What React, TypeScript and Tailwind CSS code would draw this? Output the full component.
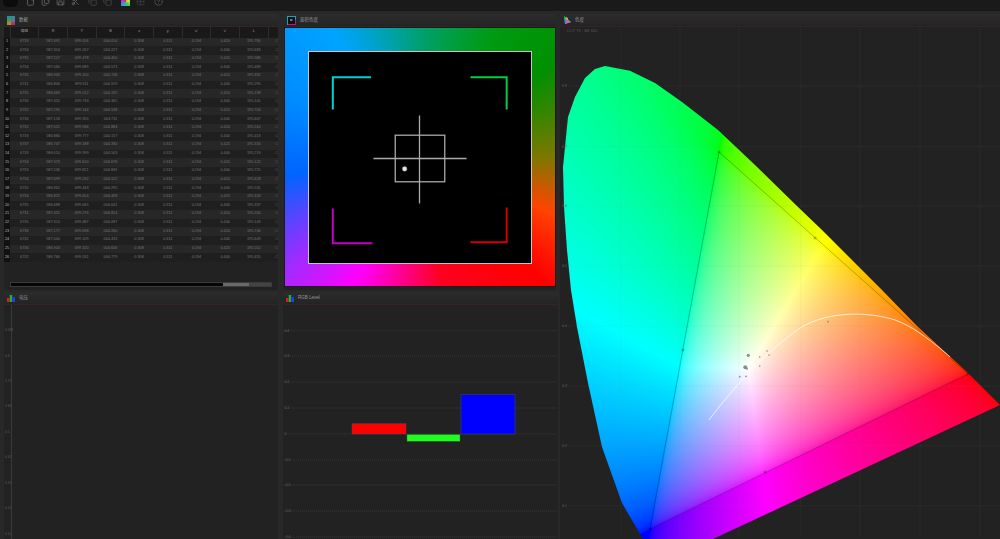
import React, { useEffect, useRef } from "react";
import { CircleHelp, Copy, File, Files, Grid2x2, Save, Scissors } from "lucide-react";

const COLUMNS = ["编辑", "R", "Y", "B", "x", "y", "u'", "v'", "L"];

const ROWS = Array.from({ length: 26 }, (_, i) => [
  String(6733 + ((i * 7) % 5) - (i % 3)),
  (587.491 - ((i * 137) % 900) / 1000).toFixed(3),
  (699.056 + ((i * 211) % 800) / 1000).toFixed(3),
  (604.054 + ((i * 173) % 900) / 1000).toFixed(3).replace(/^6/, "0"),
  "0.308",
  "0.311",
  "0.194",
  i % 2 ? "0.440" : "0.420",
  (195.78 - ((i * 97) % 700) / 1000).toFixed(3),
]);

const LOCUS = [
  [605, 66], [630, 70.7], [655, 83], [682, 102], [718, 130], [755, 165], [798, 207], [822, 230],
  [882, 290], [918, 327], [968, 373], [1000, 405], [713, 539], [643, 539], [622, 503],
  [602, 447], [588, 383], [577, 327], [571, 290], [567, 250], [564, 207], [563, 167], [568, 117],
  [575, 97], [585, 78], [595, 69],
];

const SPOTS = [
  [748.3, 355.3, 1.6], [767, 351, 0.8], [769, 355, 0.8], [759.7, 357, 0.8], [759.7, 366, 0.8],
  [745.3, 367.3, 2], [747, 368.7, 1], [739.7, 376.7, 0.9], [746, 376.3, 0.9], [828, 321.7, 0.9],
];

const CIE_Y = [
  [86, "0.8"], [146.7, "0.7"], [206, "0.6"], [266, "0.5"], [326, "0.4"], [386, "0.3"], [445.7, "0.2"], [505.7, "0.1"],
] as const;
const CIE_X = [620.7, 680, 739, 800.7, 860, 920, 980];

const LEVELS = [
  [330.7, "0.4"], [356, "0.3"], [382, "0.2"], [408, "0.1"], [434, "0"], [460, "-0.1"], [485, "-0.2"], [511, "-0.3"], [537, "-0.4"],
] as const;

const VOLTS = [
  [330, "0.084"], [356, "0.8"], [381, "0.71"], [406, "0.64"], [432, "0.5"], [457, "0.41"], [483, "0.31"], [508, "0.21"], [534, "0.11"],
] as const;

function CieCanvas() {
  const ref = useRef<HTMLCanvasElement>(null);

  useEffect(() => {
    const ctx = ref.current?.getContext("2d");
    if (!ctx) return;
    const [ox, oy, w, h] = [560, 27, 440, 512];
    const [gx, gy, bx, by, rx, ry] = [719, 152, 650, 529, 968, 374];
    const d = (gy - by) * (rx - bx) + (bx - gx) * (ry - by);
    const bary = (x: number, y: number) => {
      const g = ((y - by) * (rx - bx) + (bx - x) * (ry - by)) / d;
      const r = ((gy - by) * (x - bx) + (bx - gx) * (y - by)) / d;
      return [r, g, 1 - r - g];
    };
    const white = bary(748, 368);
    const img = ctx.createImageData(w, h);
    for (let py = 0; py < h; py++) {
      for (let px = 0; px < w; px++) {
        const raw = bary(px + ox, py + oy).map((v, i) => v / white[i]);
        const c = raw.map((v) => Math.max(0, v));
        // left of the green-blue edge the reference leans further to cyan
        if (raw[0] < 0) c[2] += 0.45 * -raw[0];
        const max = Math.max(...c) || 1;
        const at = (py * w + px) * 4;
        img.data[at] = 255 * Math.pow(c[0] / max, 0.45);
        img.data[at + 1] = 255 * Math.pow(c[1] / max, 0.45);
        img.data[at + 2] = 255 * Math.pow(c[2] / max, 0.45);
        img.data[at + 3] = 255;
      }
    }
    ctx.putImageData(img, 0, 0);
    ctx.globalCompositeOperation = "destination-in";
    ctx.beginPath();
    LOCUS.forEach(([x, y], i) => (i ? ctx.lineTo(x - ox, y - oy) : ctx.moveTo(x - ox, y - oy)));
    ctx.closePath();
    ctx.fill();
  }, []);

  return <canvas ref={ref} width={440} height={512} className="absolute inset-0" />;
}

function CieChart() {
  return (
    <div className="relative flex-1 overflow-hidden">
      <CieCanvas />
      <svg viewBox="560 27 440 512" className="absolute inset-0 h-full w-full">
        {CIE_X.map((x) => (
          <line key={x} x1={x} x2={x} y1={27} y2={539} stroke="#808080" strokeOpacity={0.16} strokeWidth={0.7} strokeDasharray="1 1" />
        ))}
        {CIE_Y.map(([y, label]) => (
          <g key={label}>
            <line x1={562} x2={1000} y1={y} y2={y} stroke="#808080" strokeOpacity={0.22} strokeWidth={0.7} strokeDasharray="1 1" />
            <text x={562} y={y + 1.2} fontSize={3.5} fill="#5c5c5c">{label}</text>
          </g>
        ))}
        <text x={567} y={31.5} fontSize={4} fill="#555">CCT 78 · ΔE 600</text>
        <polygon points="719,152 650,529 968,374" fill="none" stroke="#000" strokeOpacity={0.3} strokeWidth={0.8} />
        {[[719, 152], [650, 529], [968, 374], [815, 238], [683, 350], [765, 472]].map(([x, y]) => (
          <circle key={x} cx={x} cy={y} r={1.3} fill="#000" fillOpacity={0.18} stroke="#000" strokeOpacity={0.25} strokeWidth={0.4} />
        ))}
        <path
          d="M709 420C730 392 765 352 800 328C830 310 870 312 895 320C915 327 935 344 950 357"
          fill="none"
          stroke="#fff"
          strokeOpacity={0.85}
          strokeWidth={0.9}
        />
        {SPOTS.map(([x, y, r]) => (
          <circle key={x} cx={x} cy={y} r={r} fill="#8d8d8d" />
        ))}
      </svg>
    </div>
  );
}

function TargetMarks() {
  return (
    <svg viewBox="308 50 224 213" className="h-full w-full" fill="none">
      <path d="M332 108V75.5H370.500" stroke="#00d2d2" strokeWidth={2} />
      <path d="M471 75.500H507.500V108" stroke="#00d044" strokeWidth={2} />
      <path d="M332 208V243H372" stroke="#c400c4" strokeWidth={2} />
      <path d="M471 242H507.500V207" stroke="#d40000" strokeWidth={2} />
      <g stroke="#ababab" strokeWidth={1.3}>
        <path d="M419.500 114V203M373 157.500H467" />
        <rect x={395} y={134} width={50} height={47} />
      </g>
      <circle cx={404.500} cy={168} r={2.300} fill="#e8e8e8" stroke="#999" strokeWidth={0.5} />
    </svg>
  );
}

function PanelTitle({ icon, children }: { icon: React.ReactNode; children: React.ReactNode }) {
  return (
    <div className="flex h-[13px] shrink-0 items-center gap-[4px] border-b border-[#352525] bg-gradient-to-b from-[#2c2c2c] to-[#242424] pl-[3px] text-[4.5px] text-[#9a9a9a]">
      {icon}
      <span>{children}</span>
    </div>
  );
}

const TableIcon = (
  <svg viewBox="0 0 8 9" className="h-[9px] w-[8px]">
    <rect width="8" height="3" fill="#2e8f8a" />
    <rect y="3" width="4" height="3" fill="#3ea04a" />
    <rect x="4" y="3" width="4" height="3" fill="#8a5aa8" />
    <rect y="6" width="4" height="3" fill="#b08a30" />
    <rect x="4" y="6" width="4" height="3" fill="#a83a5a" />
  </svg>
);

const TargetIcon = (
  <svg viewBox="0 0 9 9" className="h-[9px] w-[9px]">
    <rect x="0.5" y="0.5" width="8" height="8" fill="#111" stroke="#1aa0c0" />
    <path d="M8.500 4V8.500H1" fill="none" stroke="#c0108a" />
    <rect x="3" y="3" width="2.500" height="2" fill="#777" />
  </svg>
);

const GamutIcon = (
  <svg viewBox="0 0 8 8" className="h-[8px] w-[8px]">
    <path d="M1 0L8 6L2 8Z" fill="#30d060" />
    <path d="M3 3.500L8 6L2 8Z" fill="#e050c0" />
    <path d="M1 4L3 4.500L2 8Z" fill="#3060ff" />
    <path d="M3 0.500L5 2.500L4 4Z" fill="#e0e040" />
  </svg>
);

const BarsIcon = (
  <svg viewBox="0 0 8 7" className="h-[7px] w-[8px]">
    <rect y="3" width="2.500" height="4" fill="#d02020" />
    <rect x="2.700" width="2.500" height="7" fill="#20b040" />
    <rect x="5.400" y="2" width="2.600" height="5" fill="#2040e0" />
  </svg>
);

export default function App() {
  return (
    <div className="flex h-[539px] w-[1000px] flex-col overflow-hidden bg-[#282828] blur-[0.5px] [font-family:'Liberation_Sans','Noto_Sans_CJK_SC',sans-serif]">
      {/* toolbar, cut off at the top of the capture */}
      <div className="h-[11px] shrink-0 overflow-hidden bg-[#1a1a1a] text-[#6e6e6e]">
        <div className="-mt-[4px] flex items-center">
          <div className="ml-[3px] h-[11px] w-[15px] rounded-full bg-[#0c0c0c]" />
          <div className="ml-[8px] flex items-center gap-[6px]">
            <File size={9} />
            <Files size={9} />
            <Save size={9} />
            <Scissors size={9} />
            <Copy size={9} className="ml-[2px] text-[#4c4c4c]" />
            <Copy size={9} className="text-[#4c4c4c]" />
            <div className="ml-[3px] h-[9px] w-[9px] bg-[conic-gradient(#e03030,#e0e030,#30d060,#30a0e0,#c030c0,#e03030)]" />
            <Grid2x2 size={9} className="text-[#3f3f3f]" />
            <CircleHelp size={9} className="ml-[3px] text-[#555]" />
          </div>
        </div>
      </div>

      <div className="grid flex-1 grid-cols-[280px_278px_442px] grid-rows-[278px_247px] pt-[3px]">
        {/* data table */}
        <div className="pb-[2px] pl-[4px] pr-[2px]">
          <div className="flex h-full flex-col bg-[#222222]">
            <PanelTitle icon={TableIcon}>数据</PanelTitle>
            <table className="w-[274px] table-fixed border-collapse text-center text-[3.8px] leading-none text-[#767676]">
              <thead>
                <tr className="h-[10.500px] bg-[#191919] text-[#999]">
                  <th className="w-[6px] font-normal" />
                  {COLUMNS.map((name) => (
                    <th key={name} className="w-[28.700px] border-l border-[#2d2d2d] font-normal">{name}</th>
                  ))}
                  <th className="border-l border-[#2d2d2d]" />
                </tr>
              </thead>
              <tbody>
                {ROWS.map((row, i) => (
                  <tr key={i} className={i % 2 ? "h-[8.640px] bg-[#1f1f1f]" : "h-[8.640px] bg-[#272727]"}>
                    <td className="bg-[#111111] text-[#bbb]">{i + 1}</td>
                    {row.map((cell, j) => (
                      <td key={j}>{cell}</td>
                    ))}
                    <td className="text-right text-[#6a5a4a]">C</td>
                  </tr>
                ))}
              </tbody>
            </table>
            <div className="mx-[6px] mb-[3px] mt-auto flex h-[5px] border border-[#3b3b3b] bg-[#444]">
              <div className="w-[212px] bg-[#050505]" />
              <div className="w-[26px] bg-[#6a6a6a]" />
            </div>
          </div>
        </div>

        {/* target colour view */}
        <div className="pb-[2px] pl-[4px] pr-[2px]">
          <div className="flex h-full flex-col bg-[#222222]">
            <PanelTitle icon={TargetIcon}>面积色度</PanelTitle>
            <div className="flex h-[260px] items-center justify-center border border-[#1a1a1a] bg-[conic-gradient(#00a070_0deg,#009a10_32deg,#009000_55deg,#7c7800_90deg,#ff4400_113deg,#ff0000_135deg,#ff0020_170deg,#ff00ff_208deg,#a828ff_228deg,#0064ff_262deg,#008cff_295deg,#00a4ff_325deg,#00a070_360deg)]">
              <div className="h-[213px] w-[224px] border-[1.500px] border-[#c4c4c4] bg-black">
                <TargetMarks />
              </div>
            </div>
          </div>
        </div>

        {/* gamut diagram */}
        <div className="row-span-2 pl-[2px]">
          <div className="flex h-full flex-col bg-[#222222]">
            <PanelTitle icon={GamutIcon}>色度</PanelTitle>
            <CieChart />
          </div>
        </div>

        {/* voltage chart */}
        <div className="pl-[4px] pr-[2px]">
          <div className="flex h-full flex-col bg-[#222222]">
            <PanelTitle icon={BarsIcon}>电压</PanelTitle>
            <svg viewBox="4 305 274 234" className="flex-1">
              <line x1={11.500} x2={11.500} y1={305} y2={539} stroke="#3a3a3a" strokeWidth={1} />
              {VOLTS.map(([y, label]) => (
                <text key={y} x={5} y={y + 1} fontSize={3.2} fill="#5e5e5e">{label}</text>
              ))}
            </svg>
          </div>
        </div>

        {/* rgb level chart */}
        <div className="pr-[0px] pl-[3px]">
          <div className="flex h-full flex-col bg-[#222222]">
            <PanelTitle icon={BarsIcon}>RGB Level</PanelTitle>
            <svg viewBox="283 305 275 234" className="flex-1">
              {LEVELS.map(([y, label]) => (
                <g key={label}>
                  <line x1={284} x2={558} y1={y} y2={y} stroke="#414141" strokeWidth={0.7} strokeDasharray="1 1" />
                  <text x={284.500} y={y + 1.200} fontSize={3.4} fill="#666">{label}</text>
                </g>
              ))}
              <rect x={352} y={423.700} width={54} height={10.300} fill="#ff0000" stroke="#50505a" strokeWidth={0.4} />
              <rect x={407} y={434.500} width={53} height={6.800} fill="#1cff1c" stroke="#50505a" strokeWidth={0.4} />
              <rect x={461} y={394.500} width={54} height={39.500} fill="#0000ff" stroke="#50505a" strokeWidth={0.4} />
            </svg>
          </div>
        </div>
      </div>
    </div>
  );
}
